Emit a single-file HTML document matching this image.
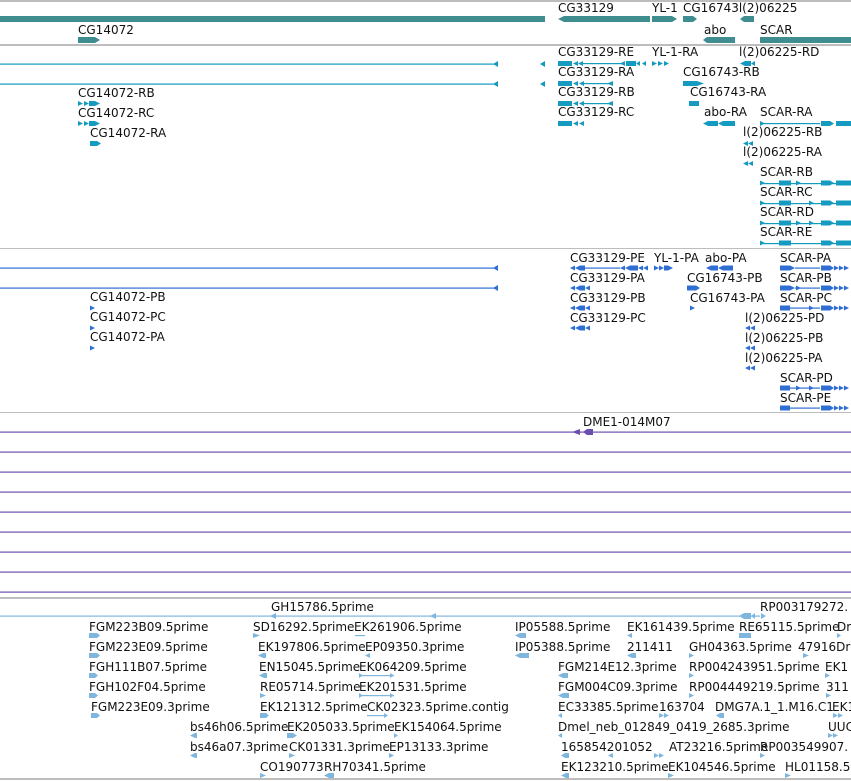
<!DOCTYPE html>
<html><head><meta charset="utf-8"><style>
html,body{margin:0;padding:0;background:#fff;width:851px;height:781px;overflow:hidden}
svg{display:block}
text{font-family:"DejaVu Sans","Liberation Sans",sans-serif;font-size:12px;fill:#111}
</style></head><body>
<svg width="851" height="781" viewBox="0 0 851 781" xmlns="http://www.w3.org/2000/svg">
<!-- grey separators -->
<g fill="#bdbdbd">
<rect x="0" y="0" width="851" height="2"/>
<rect x="0" y="44" width="851" height="2"/>
<rect x="0" y="248" width="851" height="1"/>
<rect x="0" y="412" width="851" height="1"/>
<rect x="0" y="597" width="851" height="2"/>
<rect x="0" y="778" width="851" height="2"/>
</g>

<!-- Track 1: genes (teal) -->
<g fill="#3f8d8f">
<rect x="0" y="16" width="545" height="6"/>
<polygon points="558,19 564,16 650,16 650,22 564,22"/>
<polygon points="652,16 672,16 677,19 672,22 652,22"/>
<polygon points="683,16 693,16 697,19 693,22 683,22"/>
<polygon points="740,19 744,16 754,16 754,22 744,22"/>
<polygon points="78,37 95,37 100,40 95,43 78,43"/>
<polygon points="703,40 707,37 735,37 735,43 707,43"/>
<rect x="760" y="37" width="91" height="6"/>
</g>
<g>
<text x="558" y="12">CG33129</text>
<text x="652" y="12">YL-1</text>
<text x="683" y="12">CG16743l(2)06225</text>
<text x="78" y="34">CG14072</text>
<text x="704" y="34">abo</text>
<text x="760" y="34">SCAR</text>
</g>

<!-- Track 2: transcripts (cyan) -->
<g fill="#159ac0" stroke="none">
<rect x="0" y="63.5" width="498" height="1.2"/>
<polygon points="493,64 498,61 498,67"/>
<rect x="0" y="83.5" width="498" height="1.2"/>
<polygon points="493,84 498,81 498,87"/>
<polygon points="540,64 545,61 545,67"/>
<polygon points="540,84 545,81 545,87"/>
<!-- RE -->
<rect x="558" y="61" width="14" height="5"/><polygon points="573,63.5 578,61 578,66"/><polygon points="578,63.5 583,61 583,66"/>
<rect x="583" y="63" width="40" height="1.2"/>
<polygon points="620,63.5 625,61 625,66"/><rect x="626" y="61" width="10" height="5"/><polygon points="636,63.5 640,61 640,66"/><polygon points="642,63.5 646,61 646,66"/>
<polygon points="652,61 657,63.5 652,66"/><polygon points="658,61 663,63.5 658,66"/><polygon points="664,61 669,63.5 664,66"/>
<polygon points="740,63.5 745,61 747,61 747,66 745,66"/><rect x="747" y="61" width="4" height="5"/><polygon points="751,63.5 755,61 755,66"/>
<!-- RA row -->
<rect x="558" y="81" width="14" height="5"/><polygon points="573,83.5 578,81 578,86"/><polygon points="579,83.5 584,81 584,86"/>
<rect x="584" y="83" width="29" height="1.2"/><polygon points="607,83.5 613,81 613,86"/>
<polygon points="683,81 697,81 704,83.5 697,86 683,86"/>
<!-- RB row -->
<polygon points="78,101 83,103.5 78,106"/><polygon points="84,101 89,103.5 84,106"/><rect x="89" y="101" width="6" height="5"/><polygon points="95,101 100,103.5 95,106"/>
<rect x="558" y="101" width="14" height="5"/><polygon points="573,103.5 578,101 578,106"/><polygon points="579,103.5 584,101 584,106"/>
<rect x="584" y="103" width="29" height="1.2"/><polygon points="607,103.5 613,101 613,106"/>
<rect x="689" y="101" width="10" height="5"/>
<!-- RC row -->
<polygon points="78,121 83,123.5 78,126"/><polygon points="84,121 89,123.5 84,126"/><rect x="89" y="121" width="6" height="5"/><polygon points="95,121 100,123.5 95,126"/>
<rect x="558" y="121" width="14" height="5"/><polygon points="573,123.5 578,121 578,126"/><polygon points="579,123.5 584,121 584,126"/>
<polygon points="703,123.5 708,121 718,121 718,126 708,126"/><polygon points="718,123.5 723,121 735,121 735,126 723,126"/>
<rect x="760" y="123" width="60" height="1.2"/><polygon points="760,121 765,123.5 760,126"/>
<polygon points="821,121 830,121 834,123.5 830,126 821,126"/><rect x="836" y="121" width="15" height="5"/>
<!-- CG14072-RA -->
<polygon points="90,141 97,141 101,143.5 97,146 90,146"/>
<!-- l(2) RB / RA -->
<polygon points="743,143.5 748,141 748,146"/><polygon points="748,143.5 753,141 753,146"/>
<polygon points="743,163.5 748,161 748,166"/><polygon points="748,163.5 753,161 753,166"/>
</g>
<!-- SCAR RB..RE -->
<g fill="#159ac0">
<g transform="translate(0,183)">
<rect x="760" y="0" width="91" height="1.2"/><polygon points="760,-2.5 765,0 760,2.5"/><rect x="779" y="-2.5" width="12" height="5"/><polygon points="796,-2.5 801,0 796,2.5"/><polygon points="821,-2.5 830,-2.5 834,0 830,2.5 821,2.5"/><rect x="836" y="-2.5" width="15" height="5"/>
</g>
<g transform="translate(0,203)">
<rect x="760" y="0" width="91" height="1.2"/><polygon points="760,-2.5 765,0 760,2.5"/><rect x="779" y="-2.5" width="12" height="5"/><polygon points="809,-2.5 814,0 809,2.5"/><polygon points="821,-2.5 830,-2.5 834,0 830,2.5 821,2.5"/><rect x="836" y="-2.5" width="15" height="5"/>
</g>
<g transform="translate(0,223)">
<rect x="760" y="0" width="91" height="1.2"/><polygon points="760,-2.5 765,0 760,2.5"/><rect x="779" y="-2.5" width="12" height="5"/><polygon points="796,-2.5 801,0 796,2.5"/><polygon points="809,-2.5 814,0 809,2.5"/><polygon points="821,-2.5 830,-2.5 834,0 830,2.5 821,2.5"/><rect x="836" y="-2.5" width="15" height="5"/>
</g>
<g transform="translate(0,243)">
<rect x="760" y="0" width="91" height="1.2"/><polygon points="760,-2.5 765,0 760,2.5"/><rect x="779" y="-2.5" width="12" height="5"/><polygon points="821,-2.5 830,-2.5 834,0 830,2.5 821,2.5"/><rect x="836" y="-2.5" width="15" height="5"/>
</g>
</g>
<g>
<text x="558" y="56">CG33129-RE</text><text x="652" y="56">YL-1-RA</text><text x="739" y="56">l(2)06225-RD</text>
<text x="558" y="76">CG33129-RA</text><text x="683" y="76">CG16743-RB</text>
<text x="78" y="97">CG14072-RB</text><text x="558" y="96">CG33129-RB</text><text x="690" y="96">CG16743-RA</text>
<text x="78" y="117">CG14072-RC</text><text x="558" y="116">CG33129-RC</text><text x="704" y="116">abo-RA</text><text x="760" y="116">SCAR-RA</text>
<text x="90" y="137">CG14072-RA</text><text x="743" y="136">l(2)06225-RB</text>
<text x="743" y="156">l(2)06225-RA</text>
<text x="760" y="176">SCAR-RB</text>
<text x="760" y="196">SCAR-RC</text>
<text x="760" y="216">SCAR-RD</text>
<text x="760" y="236">SCAR-RE</text>
</g>

<!-- Track 3: proteins (blue) -->
<g fill="#2f6fd3">
<rect x="0" y="267.5" width="498" height="1.2"/><polygon points="493,268 498,265 498,271"/>
<rect x="0" y="287.5" width="498" height="1.2"/><polygon points="493,288 498,285 498,291"/>
<!-- PE -->
<polygon points="570,268 575,265.5 575,270.5"/><polygon points="575,268 580,265.5 580,270.5"/><rect x="580" y="265.5" width="5" height="5"/><rect x="585" y="267.5" width="35" height="1.2"/>
<polygon points="620,268 625,265.5 625,270.5"/><polygon points="625,268 630,265.5 630,270.5"/><rect x="630" y="265.5" width="8" height="5"/><polygon points="638,268 643,265.5 643,270.5"/><polygon points="643,268 648,265.5 648,270.5"/>
<polygon points="654,265.5 659,268 654,270.5"/><polygon points="659,265.5 664,268 659,270.5"/><polygon points="664,265.5 668,265.5 673,268 668,270.5 664,270.5"/>
<polygon points="706,268 711,265.5 718,265.5 718,270.5 711,270.5"/><polygon points="718,268 723,265.5 733,265.5 733,270.5 723,270.5"/>
<rect x="780" y="265.5" width="10" height="5"/><polygon points="790,265.5 795,268 790,270.5"/><rect x="795" y="267.5" width="25" height="1.2"/><polygon points="821,265.5 830,265.5 834,268 830,270.5 821,270.5"/><polygon points="834,265.5 839,268 834,270.5"/><polygon points="839,265.5 844,268 839,270.5"/><polygon points="844,265.5 849,268 844,270.5"/>
<!-- PA row -->
<polygon points="570,288 575,285.5 575,290.5"/><polygon points="575,288 580,285.5 580,290.5"/><rect x="580" y="285.5" width="5" height="5"/><polygon points="585,288 590,285.5 590,290.5"/>
<polygon points="687,285.5 696,285.5 700,288 696,290.5 687,290.5"/>
<rect x="780" y="285.5" width="10" height="5"/><polygon points="790,285.5 795,288 790,290.5"/><rect x="795" y="287.5" width="25" height="1.2"/><polygon points="796,285.5 801,288 796,290.5"/><polygon points="821,285.5 830,285.5 834,288 830,290.5 821,290.5"/><polygon points="834,285.5 839,288 834,290.5"/><polygon points="839,285.5 844,288 839,290.5"/><polygon points="844,285.5 849,288 844,290.5"/>
<!-- PB row -->
<polygon points="90,305.5 95,308 90,310.5"/>
<polygon points="570,308 575,305.5 575,310.5"/><polygon points="575,308 580,305.5 580,310.5"/><rect x="580" y="305.5" width="5" height="5"/><polygon points="585,308 590,305.5 590,310.5"/>
<polygon points="690,305.5 695,308 690,310.5"/>
<rect x="780" y="305.5" width="10" height="5"/><rect x="790" y="307.5" width="30" height="1.2"/><polygon points="809,305.5 814,308 809,310.5"/><polygon points="821,305.5 830,305.5 834,308 830,310.5 821,310.5"/><polygon points="834,305.5 839,308 834,310.5"/><polygon points="839,305.5 844,308 839,310.5"/><polygon points="844,305.5 849,308 844,310.5"/>
<!-- PC row -->
<polygon points="90,325.5 95,328 90,330.5"/>
<polygon points="570,328 575,325.5 575,330.5"/><polygon points="575,328 580,325.5 580,330.5"/><rect x="580" y="325.5" width="5" height="5"/><polygon points="585,328 590,325.5 590,330.5"/>
<polygon points="745,328 750,325.5 750,330.5"/><polygon points="750,328 755,325.5 755,330.5"/>
<polygon points="90,345.5 95,348 90,350.5"/>
<polygon points="745,348 750,345.5 750,350.5"/><polygon points="750,348 755,345.5 755,350.5"/>
<polygon points="745,368 750,365.5 750,370.5"/><polygon points="750,368 755,365.5 755,370.5"/>
<!-- PD -->
<rect x="780" y="385.5" width="10" height="5"/><rect x="790" y="387.5" width="30" height="1.2"/><polygon points="796,385.5 801,388 796,390.5"/><polygon points="809,385.5 814,388 809,390.5"/><polygon points="821,385.5 830,385.5 834,388 830,390.5 821,390.5"/><polygon points="834,385.5 839,388 834,390.5"/><polygon points="839,385.5 844,388 839,390.5"/><polygon points="844,385.5 849,388 844,390.5"/>
<!-- PE -->
<rect x="780" y="405.5" width="10" height="5"/><rect x="790" y="407.5" width="30" height="1.2"/><polygon points="821,405.5 830,405.5 834,408 830,410.5 821,410.5"/><polygon points="834,405.5 839,408 834,410.5"/><polygon points="839,405.5 844,408 839,410.5"/><polygon points="844,405.5 849,408 844,410.5"/>
</g>
<g>
<text x="570" y="262">CG33129-PE</text><text x="654" y="262">YL-1-PA</text><text x="705" y="262">abo-PA</text><text x="780" y="262">SCAR-PA</text>
<text x="570" y="282">CG33129-PA</text><text x="687" y="282">CG16743-PB</text><text x="780" y="282">SCAR-PB</text>
<text x="90" y="301">CG14072-PB</text><text x="570" y="302">CG33129-PB</text><text x="690" y="302">CG16743-PA</text><text x="780" y="302">SCAR-PC</text>
<text x="90" y="321">CG14072-PC</text><text x="570" y="322">CG33129-PC</text><text x="745" y="322">l(2)06225-PD</text>
<text x="90" y="341">CG14072-PA</text><text x="745" y="342">l(2)06225-PB</text>
<text x="745" y="362">l(2)06225-PA</text>
<text x="780" y="382">SCAR-PD</text>
<text x="780" y="402">SCAR-PE</text>
</g>

<!-- Track 4: clones (purple) -->
<g fill="#6b4fae">
<rect x="0" y="431.5" width="851" height="1.2"/>
<polygon points="572,432 580,429 580,435"/><polygon points="583,432 587,429 593,429 593,435 587,435"/>
<rect x="0" y="451.5" width="851" height="1.2"/>
<rect x="0" y="471.5" width="851" height="1.2"/>
<rect x="0" y="491.5" width="851" height="1.2"/>
<rect x="0" y="511.5" width="851" height="1.2"/>
<rect x="0" y="531.5" width="851" height="1.2"/>
<rect x="0" y="551.5" width="851" height="1.2"/>
<rect x="0" y="571.5" width="851" height="1.2"/>
<rect x="0" y="591.5" width="851" height="1.2"/>
</g>
<text x="583" y="426">DME1-014M07</text>

<!-- Track 5: ESTs (light blue) -->
<g fill="#7fb6de">
<rect x="0" y="615.5" width="760" height="1.2"/>
<polygon points="270,616 276,613 276,619"/><polygon points="430,616 436,613 436,619"/>
<polygon points="739,616 744,613 751,613 751,619 744,619"/><polygon points="751,616 755,613 755,619"/><polygon points="761,613 766,616 761,619"/>
<!-- row 620 glyph y 635 -->
<polygon points="89,633 97,633 100,635.5 97,638 89,638"/><polygon points="253,633 260,635.5 253,638"/><rect x="355" y="635" width="10" height="1.2"/>
<polygon points="515,635.5 520,633 526,633 526,638 520,638"/><polygon points="627,635.5 632,633 632,638"/><rect x="739" y="633" width="12" height="5"/><polygon points="837,633 841,635.5 837,638"/>
<!-- row 640 -->
<polygon points="89,653 97,653 100,655.5 97,658 89,658"/><polygon points="258,655.5 263,653 266,653 266,658 263,658"/><polygon points="365,655.5 370,653 370,658"/>
<polygon points="515,655.5 520,653 529,653 529,658 520,658"/><polygon points="627,655.5 632,653 636,653 636,658 632,658"/><polygon points="689,653 694,655.5 689,658"/><polygon points="803,653 809,655.5 803,658"/>
<!-- row 660 -->
<polygon points="89,673 95,673 98,675.5 95,678 89,678"/><polygon points="259,675.5 264,673 267,673 267,678 264,678"/><rect x="359" y="675" width="35" height="1.2"/><polygon points="359,673 363,675.5 359,678"/><polygon points="390,673 394,675.5 390,678"/>
<polygon points="558,675.5 563,673 568,673 568,678 563,678"/><polygon points="689,673 694,675.5 689,678"/><polygon points="825,673 830,675.5 825,678"/>
<!-- row 680 -->
<polygon points="89,693 95,693 98,695.5 95,698 89,698"/><polygon points="260,693 266,695.5 260,698"/><rect x="359" y="695" width="35" height="1.2"/><polygon points="359,693 363,695.5 359,698"/><polygon points="390,693 394,695.5 390,698"/>
<polygon points="558,695.5 563,693 569,693 569,698 563,698"/><polygon points="689,693 694,695.5 689,698"/><polygon points="826,693 831,695.5 826,698"/>
<!-- row 700 -->
<polygon points="91,713 97,713 100,715.5 97,718 91,718"/><polygon points="260,713 266,713 269,715.5 266,718 260,718"/><rect x="367" y="715" width="20" height="1.2"/><polygon points="384,713 388,715.5 384,718"/>
<polygon points="558,715.5 562,713 562,718"/><polygon points="659,713 664,715.5 659,718"/><polygon points="664,713 669,715.5 664,718"/><polygon points="716,715.5 720,713 724,713 724,718 720,718"/><polygon points="833,713 838,715.5 833,718"/><polygon points="838,713 843,715.5 838,718"/>
<!-- row 720 -->
<polygon points="190,735.5 195,733 197,733 197,738 195,738"/><polygon points="287,733 293,733 297,735.5 293,738 287,738"/><polygon points="394,733 398,735.5 394,738"/>
<polygon points="558,735.5 562,733 562,738"/><polygon points="828,733 833,735.5 828,738"/><polygon points="833,733 838,735.5 833,738"/>
<!-- row 740 -->
<polygon points="190,755.5 195,753 197,753 197,758 195,758"/><polygon points="289,753 295,755.5 289,758"/><polygon points="389,753 394,755.5 389,758"/>
<polygon points="561,755.5 565,753 569,753 569,758 565,758"/><polygon points="608,755.5 613,753 613,758"/><polygon points="654,753 659,755.5 654,758"/><polygon points="659,753 664,755.5 659,758"/><polygon points="760,753 765,755.5 760,758"/>
<!-- row 760 -->
<polygon points="260,773 266,775.5 260,778"/><polygon points="324,775.5 329,773 334,773 334,778 329,778"/><polygon points="561,775.5 566,773 569,773 569,778 566,778"/><polygon points="668,773 674,775.5 668,778"/><polygon points="785,773 791,775.5 785,778"/>
</g>
<g>
<text x="271" y="611">GH15786.5prime</text><text x="760" y="611">RP003179272.</text>
<text x="89" y="631">FGM223B09.5prime</text><text x="253" y="631">SD16292.5prime</text><text x="354" y="631">EK261906.5prime</text><text x="515" y="631">IP05588.5prime</text><text x="627" y="631">EK161439.5prime</text><text x="739" y="631">RE65115.5prime</text><text x="837" y="631">Dr</text>
<text x="89" y="651">FGM223E09.5prime</text><text x="258" y="651">EK197806.5prime</text><text x="365" y="651">EP09350.3prime</text><text x="515" y="651">IP05388.5prime</text><text x="627" y="651">211411</text><text x="689" y="651">GH04363.5prime</text><text x="798" y="651">47916Dr</text>
<text x="89" y="671">FGH111B07.5prime</text><text x="259" y="671">EN15045.5prime</text><text x="359" y="671">EK064209.5prime</text><text x="558" y="671">FGM214E12.3prime</text><text x="689" y="671">RP004243951.5prime</text><text x="825" y="671">EK1</text>
<text x="89" y="691">FGH102F04.5prime</text><text x="260" y="691">RE05714.5prime</text><text x="359" y="691">EK201531.5prime</text><text x="558" y="691">FGM004C09.3prime</text><text x="689" y="691">RP004449219.5prime</text><text x="826" y="691">311</text>
<text x="91" y="711">FGM223E09.3prime</text><text x="260" y="711">EK121312.5prime</text><text x="367" y="711">CK02323.5prime.contig</text><text x="558" y="711">EC33385.5prime</text><text x="659" y="711">163704</text><text x="715" y="711">DMG7A.1_1.M16.C1</text><text x="832" y="711">EK1</text>
<text x="190" y="731">bs46h06.5prime</text><text x="287" y="731">EK205033.5prime</text><text x="394" y="731">EK154064.5prime</text><text x="558" y="731">Dmel_neb_012849_0419_2685.3prime</text><text x="828" y="731">UUC</text>
<text x="190" y="751">bs46a07.3prime</text><text x="289" y="751">CK01331.3prime</text><text x="389" y="751">EP13133.3prime</text><text x="561" y="751">165854201052</text><text x="669" y="751">AT23216.5prime</text><text x="760" y="751">RP003549907.</text>
<text x="260" y="771">CO190773</text><text x="324" y="771">RH70341.5prime</text><text x="561" y="771">EK123210.5prime</text><text x="668" y="771">EK104546.5prime</text><text x="785" y="771">HL01158.5</text>
</g>
</svg>
</body></html>
